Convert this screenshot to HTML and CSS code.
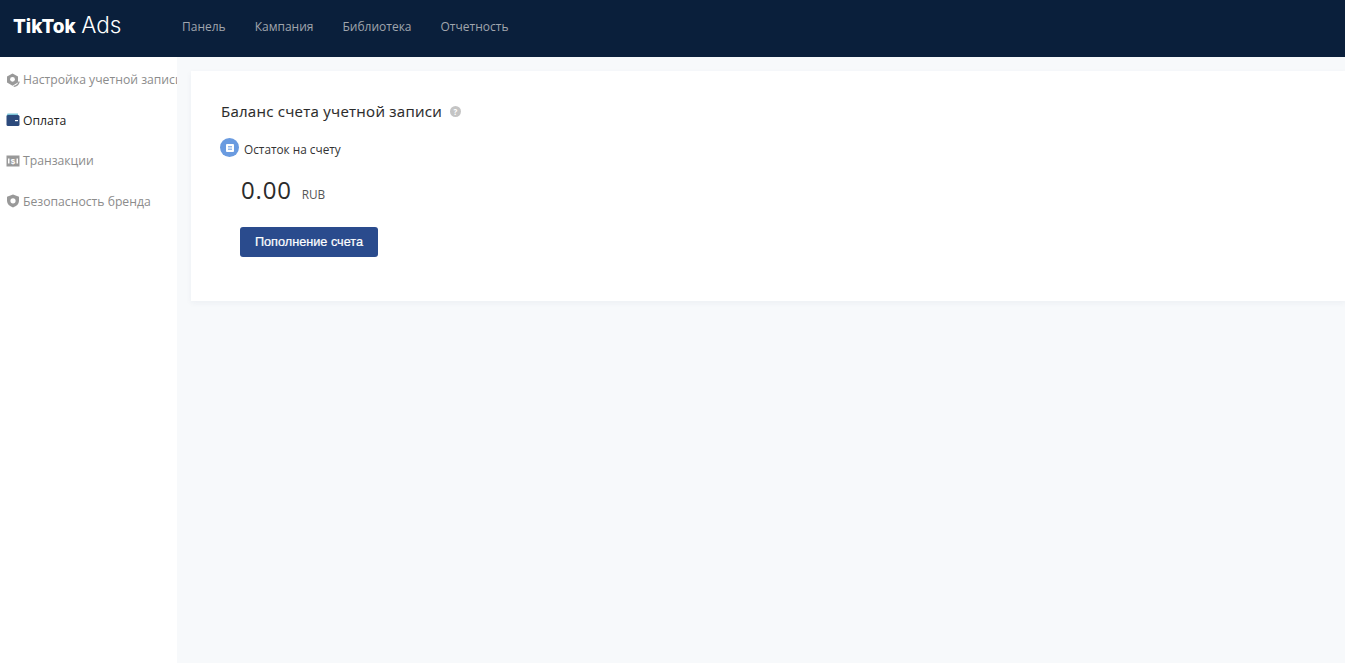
FILE: index.html
```html
<!DOCTYPE html>
<html lang="ru">
<head>
    <meta charset="UTF-8">
    <meta name="viewport" content="width=device-width, initial-scale=1.0">
    <title>TikTok Ads</title>
    <link rel="stylesheet" href="styles.css">
</head>
<body>
    <header class="topbar">
        <div class="logo"><b>TikTok</b> <span class="logo-ads">Ads</span></div>
        <nav class="topnav">
            <a>Панель</a>
            <a>Кампания</a>
            <a>Библиотека</a>
            <a>Отчетность</a>
        </nav>
    </header>

    <div class="layout">
        <aside class="sidebar">
            <div class="side-item">
                <svg class="side-icon" viewBox="0 0 14 14"><path d="M6.500.5l5.500 3v6l-5.500 3.200L1 9.500v-6z" fill="#999"/><circle cx="6.500" cy="6.300" r="2.400" fill="#fff"/><path d="M13.200 8.500c-.6 2.600-2.800 4.500-5.500 4.800" stroke="#999" stroke-width="1.200" fill="none"/></svg>
                <span>Настройка учетной записи</span>
            </div>
            <div class="side-item active">
                <svg class="side-icon" viewBox="0 0 14 14"><path d="M1.500.5h10.500v2.500H.5z" fill="#7cc4d8"/><rect x=".5" y="2" width="13" height="11" rx="1.500" fill="#2c4a7c"/><rect x="9" y="7" width="3" height="1.200" fill="#fff"/></svg>
                <span>Оплата</span>
            </div>
            <div class="side-item">
                <svg class="side-icon" viewBox="0 0 14 14"><rect x=".5" y="1.500" width="13" height="11" fill="#999"/><text x="7" y="10" class="dollar">$</text><rect x="2" y="4.500" width="1.500" height="5" fill="#fff"/><rect x="10.500" y="4.500" width="1.500" height="5" fill="#fff"/></svg>
                <span>Транзакции</span>
            </div>
            <div class="side-item">
                <svg class="side-icon" viewBox="0 0 14 14"><path d="M7 .5l6 2.300V7c0 3-2.500 5.200-6 6.500C3.500 12.200 1 10 1 7V2.800z" fill="#999"/><circle cx="7" cy="6.800" r="2.600" fill="#fff"/></svg>
                <span>Безопасность бренда</span>
            </div>
        </aside>

        <main class="content">
            <section class="card">
                <h2 class="card-title">
                    Баланс счета учетной записи
                    <span class="help">?</span>
                </h2>
                <div class="balance-label">
                    <span class="balance-icon"><svg viewBox="0 0 8 8" width="8" height="8"><rect width="8" height="8" rx="1" fill="#fff"/><path d="M2 2.500h4M2 4h4M2 5.500h4" stroke="#6a9be0" stroke-width=".7"/></svg></span>
                    Остаток на счету
                </div>
                <div class="balance-value">
                    <span class="amount">0.00</span>
                    <span class="currency">RUB</span>
                </div>
                <button type="button" class="topup-button">Пополнение счета</button>
            </section>
        </main>
    </div>
</body>
</html>
```

FILE: styles.css
```css
* {
    box-sizing: border-box;
}
body {
    margin: 0;
    height: 663px;
    overflow: hidden;
    font-family: 'Open Sans', 'Noto Sans', sans-serif;
    background-color: #f7f9fb;
    color: #333;
}
.topbar {
    height: 57px;
    background-color: #0a1f3b;
    display: flex;
    align-items: center;
    padding-left: 13px;
    padding-bottom: 6px;
}
.logo {
    width: 169px;
    font-family: 'Inter', sans-serif;
    font-size: 19px;
    line-height: 26px;
    color: #fff;
    white-space: nowrap;
}
.logo b {
    font-weight: 800;
}
.logo-ads {
    font-size: 22.500px;
    font-weight: 300;
}
.topnav {
    display: flex;
    gap: 29px;
    font-size: 12px;
    color: #a0a5ad;
    padding-top: 2px;
}
.layout {
    display: flex;
    height: 606px;
}
.sidebar {
    width: 177px;
    margin-right: 1px;
    background-color: #fff;
    padding-top: 2.400px;
    overflow: hidden;
    flex-shrink: 0;
}
.side-item {
    height: 40.500px;
    display: flex;
    align-items: center;
    gap: 3px;
    padding-left: 6px;
    font-size: 12.200px;
    color: #8c8c8c;
    white-space: nowrap;
}
.side-item.active {
    color: #222;
}
.side-icon {
    width: 14px;
    height: 14px;
    flex-shrink: 0;
}
.dollar {
    font-family: 'Liberation Sans', sans-serif;
    font-size: 8px;
    font-weight: 700;
    fill: #fff;
    text-anchor: middle;
}
.content {
    flex: 1;
    padding: 14px 0 0 13px;
}
.card {
    height: 230px;
    background-color: #fff;
    box-shadow: 0 2px 6px rgba(30, 50, 90, 0.05);
    padding: 30px 30px;
}
.card-title {
    margin: 0;
    font-size: 15px;
    font-weight: 400;
    letter-spacing: 0.25px;
    line-height: 20px;
    color: #2b2b2b;
    display: flex;
    align-items: center;
    -webkit-text-stroke: 0.1px #2b2b2b;
}
.help {
    width: 11px;
    height: 11px;
    margin-left: 8px;
    border-radius: 50%;
    background-color: #c4c4c4;
    color: #fff;
    font-size: 8px;
    font-weight: 700;
    line-height: 11px;
    text-align: center;
    -webkit-text-stroke: 0;
}
.balance-label {
    display: flex;
    align-items: center;
    gap: 5px;
    margin: 17px 0 0 -1px;
    font-size: 11.800px;
    line-height: 19px;
    color: #333;
}
.balance-icon {
    width: 19px;
    height: 19px;
    margin-bottom: 3px;
    border-radius: 50%;
    background-color: #6a9be0;
    display: flex;
    align-items: center;
    justify-content: center;
}
.balance-value {
    display: flex;
    align-items: baseline;
    gap: 10px;
    margin: 13px 0 0 20px;
}
.amount {
    font-size: 24px;
    line-height: 33px;
    letter-spacing: 0.8px;
    color: #2b2b2b;
}
.currency {
    font-size: 11.800px;
    color: #555;
}
.topup-button {
    display: block;
    width: 138px;
    height: 30px;
    margin: 21px 0 0 19px;
    background-color: #2a4b8d;
    color: #fff;
    border: none;
    border-radius: 3px;
    font-family: 'Liberation Sans', sans-serif;
    font-size: 12.700px;
    -webkit-text-stroke: 0.2px #fff;
    padding: 0;
}
```
